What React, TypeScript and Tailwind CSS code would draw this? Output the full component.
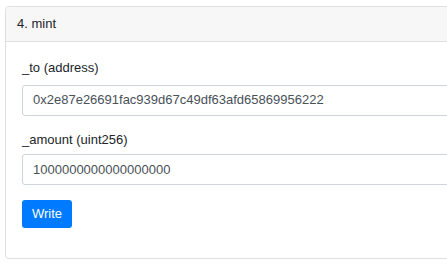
import React from "react";

export default function App() {
  return (
    <div className="w-[447px] h-[267px] overflow-hidden bg-white pt-[6px] pl-[5px]" style={{ fontFamily: '"Liberation Sans", Arial, Helvetica, sans-serif' }}>
      <div className="w-[460px] border border-[#dfdfdf] rounded-[4px] bg-white">
        <div className="h-[35px] bg-[#f7f7f7] border-b border-[#dfdfdf] flex items-center px-[11px] text-[13px] text-[#212529] rounded-t-[4px]">
          4. mint
        </div>
        <div className="pt-[16px] pl-[16px] pb-[30px]">
          <div className="mb-[14px]">
            <label className="block text-[13px] leading-[19.5px] text-[#212529] mb-[7px]">_to (address)</label>
            <div className="h-[31px] w-[430px] border border-[#ced4da] rounded-[3px] flex items-center pl-[10px] text-[13px] text-[#495057]">
              0x2e87e26691fac939d67c49df63afd65869956222
            </div>
          </div>
          <div className="mb-[15px]">
            <label className="block text-[13px] leading-[19.5px] text-[#212529] mb-[5px]">_amount (uint256)</label>
            <div className="h-[31px] w-[430px] border border-[#ced4da] rounded-[3px] flex items-center pl-[10px] text-[13px] text-[#495057]">
              1000000000000000000
            </div>
          </div>
          <button className="h-[28px] px-[10px] bg-[#007bff] text-white text-[13px] rounded-[3px] flex items-center">
            Write
          </button>
        </div>
      </div>
    </div>
  );
}
